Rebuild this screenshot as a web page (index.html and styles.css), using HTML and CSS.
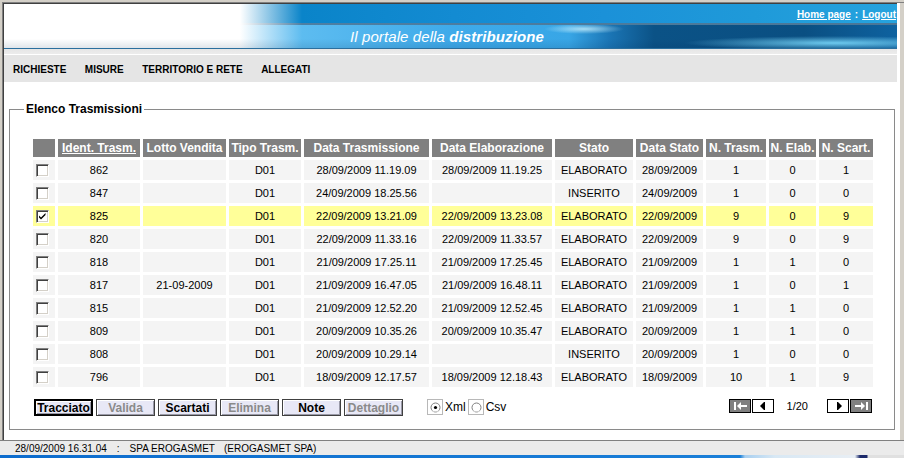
FILE: index.html
```html
<!DOCTYPE html>
<html lang="it">
<head>
<meta charset="utf-8">
<title>Elenco Trasmissioni</title>
<link rel="stylesheet" href="styles.css">
</head>
<body>
<div class="frame">
  <div class="win">
    <div class="win-in">
      <div class="page">
        <header class="banner">
          <div class="banner-top"><a class="toplink">Home page</a><span class="sep">:</span><a class="toplink">Logout</a></div>
          <div class="banner-line"></div>
          <div class="banner-bottom"><span class="tagline">Il portale della <b>distribuzione</b></span></div>
        </header>
        <div class="stripe"></div>
        <nav class="menu">
          <a>RICHIESTE</a><a>MISURE</a><a>TERRITORIO E RETE</a><a>ALLEGATI</a>
        </nav>
        <main class="content">
          <fieldset class="box">
            <legend>Elenco Trasmissioni</legend>
            <table class="grid">
              <colgroup>
                <col class="c-chk"><col class="c-id"><col class="c-lotto"><col class="c-tipo"><col class="c-dtr"><col class="c-del"><col class="c-stato"><col class="c-dst"><col class="c-ntr"><col class="c-nel"><col class="c-nsc">
              </colgroup>
              <thead>
                <tr>
                  <th></th><th><u>Ident. Trasm.</u></th><th>Lotto Vendita</th><th>Tipo Trasm.</th><th>Data Trasmissione</th><th>Data Elaborazione</th><th>Stato</th><th>Data Stato</th><th>N. Trasm.</th><th>N. Elab.</th><th>N. Scart.</th>
                </tr>
              </thead>
              <tbody>
                <tr><td><span class="cb"></span></td><td>862</td><td></td><td>D01</td><td>28/09/2009 11.19.09</td><td>28/09/2009 11.19.25</td><td>ELABORATO</td><td>28/09/2009</td><td>1</td><td>0</td><td>1</td></tr>
                <tr><td><span class="cb"></span></td><td>847</td><td></td><td>D01</td><td>24/09/2009 18.25.56</td><td></td><td>INSERITO</td><td>24/09/2009</td><td>1</td><td>0</td><td>0</td></tr>
                <tr class="sel"><td><span class="cb"><svg width="11" height="11" viewBox="0 0 11 11"><path d="M2 4.5 L4 6.5 L8.5 2 V4 L4 8.5 L2 6.5 Z" fill="#000"/></svg></span></td><td>825</td><td></td><td>D01</td><td>22/09/2009 13.21.09</td><td>22/09/2009 13.23.08</td><td>ELABORATO</td><td>22/09/2009</td><td>9</td><td>0</td><td>9</td></tr>
                <tr><td><span class="cb"></span></td><td>820</td><td></td><td>D01</td><td>22/09/2009 11.33.16</td><td>22/09/2009 11.33.57</td><td>ELABORATO</td><td>22/09/2009</td><td>9</td><td>0</td><td>9</td></tr>
                <tr><td><span class="cb"></span></td><td>818</td><td></td><td>D01</td><td>21/09/2009 17.25.11</td><td>21/09/2009 17.25.45</td><td>ELABORATO</td><td>21/09/2009</td><td>1</td><td>1</td><td>0</td></tr>
                <tr><td><span class="cb"></span></td><td>817</td><td>21-09-2009</td><td>D01</td><td>21/09/2009 16.47.05</td><td>21/09/2009 16.48.11</td><td>ELABORATO</td><td>21/09/2009</td><td>1</td><td>0</td><td>1</td></tr>
                <tr><td><span class="cb"></span></td><td>815</td><td></td><td>D01</td><td>21/09/2009 12.52.20</td><td>21/09/2009 12.52.45</td><td>ELABORATO</td><td>21/09/2009</td><td>1</td><td>1</td><td>0</td></tr>
                <tr><td><span class="cb"></span></td><td>809</td><td></td><td>D01</td><td>20/09/2009 10.35.26</td><td>20/09/2009 10.35.47</td><td>ELABORATO</td><td>20/09/2009</td><td>1</td><td>1</td><td>0</td></tr>
                <tr><td><span class="cb"></span></td><td>808</td><td></td><td>D01</td><td>20/09/2009 10.29.14</td><td></td><td>INSERITO</td><td>20/09/2009</td><td>1</td><td>0</td><td>0</td></tr>
                <tr><td><span class="cb"></span></td><td>796</td><td></td><td>D01</td><td>18/09/2009 12.17.57</td><td>18/09/2009 12.18.43</td><td>ELABORATO</td><td>18/09/2009</td><td>10</td><td>1</td><td>9</td></tr>
              </tbody>
            </table>
            <div class="actions">
              <div class="btns">
                <span class="btn btn-default">Tracciato</span>
                <span class="btn btn-off">Valida</span>
                <span class="btn">Scartati</span>
                <span class="btn btn-off">Elimina</span>
                <span class="btn">Note</span>
                <span class="btn btn-off">Dettaglio</span>
              </div>
              <div class="fmt">
                <span class="rb"><svg width="14" height="14" viewBox="0 0 14 14"><circle cx="6.5" cy="6.5" r="4.5" fill="#fff" stroke="#808080"/><path d="M3.3 9.7 A4.5 4.5 0 0 0 9.7 9.7" stroke="#dcdcdc" fill="none"/><circle cx="6.5" cy="6.5" r="1.6" fill="#000"/></svg></span><span class="rl">Xml</span>
                <span class="rb"><svg width="14" height="14" viewBox="0 0 14 14"><circle cx="6.5" cy="6.5" r="4.5" fill="#fff" stroke="#808080"/><path d="M3.3 9.7 A4.5 4.5 0 0 0 9.7 9.7" stroke="#dcdcdc" fill="none"/></svg></span><span class="rl">Csv</span>
              </div>
              <div class="pager">
                <span class="pb pb-dark"><svg width="20" height="12" viewBox="0 0 20 12"><rect x="4" y="2" width="2" height="8" fill="#fff"/><path d="M7 6 L11 2 V5 H17 V7 H11 V10 Z" fill="#fff"/></svg></span>
                <span class="pb"><svg width="20" height="12" viewBox="0 0 20 12"><path d="M7 6 L11 2 V10 Z" fill="#000"/><rect x="11" y="2" width="1" height="8" fill="#000"/></svg></span>
                <span class="pg-text">1/20</span>
                <span class="pb"><svg width="20" height="12" viewBox="0 0 20 12"><rect x="9" y="2" width="1" height="8" fill="#000"/><path d="M10 2 L14 6 L10 10 Z" fill="#000"/></svg></span>
                <span class="pb pb-dark"><svg width="20" height="12" viewBox="0 0 20 12"><path d="M14 6 L10 2 V5 H4 V7 H10 V10 Z" fill="#fff"/><rect x="15" y="2" width="2" height="8" fill="#fff"/></svg></span>
              </div>
            </div>
          </fieldset>
        </main>
      </div>
      <div class="side"></div>
    </div>
  </div>
  <footer class="status">
    <span>28/09/2009 16.31.04</span><span class="st-sep">:</span><span>SPA EROGASMET</span><span class="st-co">(EROGASMET SPA)</span>
  </footer>
  <div class="taskbar"></div>
</div>
</body>
</html>
```

FILE: styles.css
```css
* { box-sizing: border-box; }
html, body { margin: 0; padding: 0; }
body {
  width: 904px;
  height: 458px;
  overflow: hidden;
  background: #d4d0c8;
  font-family: "Liberation Sans", Arial, sans-serif;
  color: #000;
}
.frame { width: 904px; height: 458px; display: flex; flex-direction: column; }
.win {
  height: 440px;
  display: flex;
  border-top: 2px solid #d4d0c8;
  border-left: 2px solid #d4d0c8;
}
.win-in {
  flex: 1;
  display: flex;
  border-top: 1px solid #808080;
  border-left: 1px solid #808080;
}
.page {
  width: 894px;
  display: flex;
  flex-direction: column;
  background: #fff;
  border-top: 1px solid #404040;
  border-left: 1px solid #404040;
}
.side { width: 7px; background: linear-gradient(to right, #fff 3px, #d4d0c8 3px); }

/* banner */
.banner { height: 45px; display: flex; flex-direction: column; }
.banner-top {
  height: 19px;
  display: flex;
  justify-content: flex-end;
  align-items: center;
  gap: 4px;
  padding-right: 1px;
  padding-top: 1px;
  background: linear-gradient(to right, #fff 236px, #0a84c9 298px, #138bd2 450px, #1b91d8 600px, #1f9ad9 750px, #26a3de 893px);
  font-size: 10px;
  font-weight: bold;
  color: #fff;
}
.toplink { color: #fff; text-decoration: underline; }
.sep { color: #fff; }
.banner-line {
  height: 2px;
  background: linear-gradient(to right, #fff 236px, #4d7fa3 298px, #4a7696 893px);
}
.banner-bottom {
  flex: 1;
  display: flex;
  align-items: center;
  padding-left: 346px;
  border-bottom: 1px solid #2b6f9e;
  background:
    radial-gradient(ellipse 40px 5px at 580px 4px, rgba(210,245,255,0.75), rgba(210,245,255,0)),
    radial-gradient(ellipse 150px 7px at 830px 18px, rgba(120,215,250,0.9), rgba(120,215,250,0)),
    linear-gradient(to bottom, rgba(0,0,0,0) 60%, rgba(0,40,80,0.12)),
    linear-gradient(to right, #fff 236px, #5dbcf0 298px, #3eaaea 450px, #38a6e6 565px, #1b76b6 605px, #0b5286 650px, #0a4f82 800px, #0e62a0 893px);
}
.tagline {
  font-style: italic;
  font-size: 15px;
  color: #fff;
  letter-spacing: 0.1px;
}
.tagline b { font-weight: bold; }

.stripe {
  height: 6px;
  background: linear-gradient(to bottom, #e6e6e6 0, #ececec 5px, #fff 5px);
}
.menu {
  height: 27px;
  display: flex;
  align-items: center;
  gap: 18.5px;
  padding-left: 9px;
  padding-top: 1px;
  background: #e5e5e5;
  font-size: 10px;
  font-weight: bold;
}
.menu a { color: #000; }

/* content */
.content { flex: 1; }
.box {
  width: 886px;
  height: 328px;
  margin: 20px 0 0 5px;
  padding: 20px 0 0 14px;
  border: 1px solid #8a8a8a;
  min-width: 0;
}
.box legend {
  padding: 0 2px;
  font-size: 12px;
  font-weight: bold;
  line-height: 14px;
}

.grid {
  width: 846px;
  margin-left: 6px;
  table-layout: fixed;
  border-collapse: separate;
  border-spacing: 3px;
  font-size: 11px;
}
.c-chk { width: 22px; }
.c-id { width: 82px; }
.c-lotto { width: 83px; }
.c-tipo { width: 72px; }
.c-dtr { width: 125px; }
.c-del { width: 120px; }
.c-stato { width: 78px; }
.c-dst { width: 67px; }
.c-ntr { width: 60px; }
.c-nel { width: 47px; }
.c-nsc { width: 54px; }
.grid th {
  height: 18px;
  padding: 0;
  background: #808080;
  color: #fff;
  font-size: 12px;
  font-weight: bold;
  text-align: center;
  white-space: nowrap;
  overflow: hidden;
}
.grid td {
  height: 20px;
  padding: 0;
  background: #f4f4f4;
  text-align: center;
  white-space: nowrap;
}
.grid tr.sel td { background: #ffff99; }
.cb {
  display: inline-block;
  width: 13px;
  height: 13px;
  margin-left: -3px;
  vertical-align: middle;
  background: #fff;
  border: 1px solid;
  border-color: #808080 #fff #fff #808080;
  box-shadow: inset 1px 1px 0 #404040, inset -1px -1px 0 #d4d0c8;
  line-height: 0;
}
.cb svg { display: block; margin: 0; }

.actions {
  width: 846px;
  margin: 9px 0 0 6px;
  padding: 0 4px;
  display: flex;
  align-items: flex-start;
}
.btns { display: flex; gap: 3px; }
.btn {
  width: 59px;
  height: 17px;
  display: flex;
  align-items: center;
  justify-content: center;
  background: #e8e8f6;
  border: 1px solid #404040;
  box-shadow: inset 1px 1px 0 #fff, inset -1px -1px 0 #9a9aa8;
  font-size: 12px;
  font-weight: bold;
  color: #000;
}
.btn-default { border: 2px solid #000; }
.btn-off { color: #8a8a8a; }
.fmt { display: flex; align-items: center; margin-left: 24px; font-size: 12px; }
.rb {
  width: 16px;
  height: 16px;
  border: 1px solid #b8b8b8;
  background: #fff;
  padding: 1px 0 0 1px;
  line-height: 0;
}
.rl { margin: 0 2px 0 2px; }
.pager { display: flex; align-items: center; margin-left: auto; gap: 1px; font-size: 11px; }
.pb {
  width: 22px;
  height: 14px;
  border: 1px solid #000;
  background: #fff;
  line-height: 0;
}
.pb-dark { background: #808080; }
.pb svg { display: block; }
.pg-text { margin: 0 18px 0 12px; }

/* status */
.status {
  height: 15px;
  display: flex;
  align-items: center;
  padding-left: 15px;
  padding-top: 1px;
  border-top: 1px solid #808080;
  background: #ebebeb;
  font-size: 10px;
  white-space: nowrap;
}
.st-sep { margin: 0 10px 0 10px; }
.st-co { margin-left: 9px; }
.taskbar {
  height: 3px;
  background: linear-gradient(to right, #0d6ccd 0, #1a7fd8 740px, #a8cff0 745px, #d8e8f4 775px, #e8eef4 855px, #1c2a6a 860px, #1c2a6a 867px, #e0e0e0 868px);
}
```
